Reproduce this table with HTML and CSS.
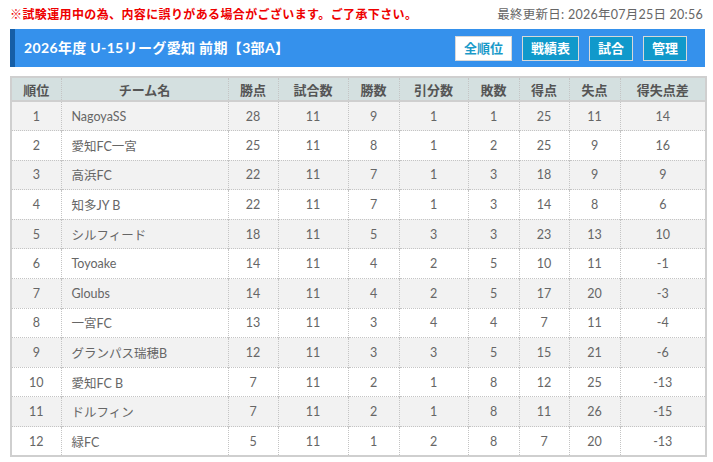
FILE: index.html
```html
<!DOCTYPE html>
<html lang="ja">
<head>
<meta charset="utf-8">
<title>2026年度 U-15リーグ愛知 前期【3部A】</title>
<link rel="stylesheet" href="styles.css">
</head>
<body>
<div class="wrap">
  <div class="top">
    <p class="notice">※試験運用中の為、内容に誤りがある場合がございます。ご了承下さい。</p>
    <p class="updated">最終更新日: 2026年07月25日 20:56</p>
  </div>
  <div class="bar">
    <h1 class="title">2026年度 U-15リーグ愛知 前期【3部A】</h1>
    <nav class="tabs">
      <a class="tab active">全順位</a>
      <a class="tab">戦績表</a>
      <a class="tab">試合</a>
      <a class="tab">管理</a>
    </nav>
  </div>
  <table class="standings">
    <colgroup>
      <col class="c-rank"><col class="c-team"><col class="c-pts"><col class="c-gp"><col class="c-w"><col class="c-d"><col class="c-l"><col class="c-gf"><col class="c-ga"><col class="c-gd">
    </colgroup>
    <thead>
      <tr><th>順位</th><th>チーム名</th><th>勝点</th><th>試合数</th><th>勝数</th><th>引分数</th><th>敗数</th><th>得点</th><th>失点</th><th>得失点差</th></tr>
    </thead>
    <tbody>
      <tr><td>1</td><td class="team">NagoyaSS</td><td>28</td><td>11</td><td>9</td><td>1</td><td>1</td><td>25</td><td>11</td><td>14</td></tr>
      <tr><td>2</td><td class="team">愛知FC一宮</td><td>25</td><td>11</td><td>8</td><td>1</td><td>2</td><td>25</td><td>9</td><td>16</td></tr>
      <tr><td>3</td><td class="team">高浜FC</td><td>22</td><td>11</td><td>7</td><td>1</td><td>3</td><td>18</td><td>9</td><td>9</td></tr>
      <tr><td>4</td><td class="team">知多JY B</td><td>22</td><td>11</td><td>7</td><td>1</td><td>3</td><td>14</td><td>8</td><td>6</td></tr>
      <tr><td>5</td><td class="team">シルフィード</td><td>18</td><td>11</td><td>5</td><td>3</td><td>3</td><td>23</td><td>13</td><td>10</td></tr>
      <tr><td>6</td><td class="team">Toyoake</td><td>14</td><td>11</td><td>4</td><td>2</td><td>5</td><td>10</td><td>11</td><td>-1</td></tr>
      <tr><td>7</td><td class="team">Gloubs</td><td>14</td><td>11</td><td>4</td><td>2</td><td>5</td><td>17</td><td>20</td><td>-3</td></tr>
      <tr><td>8</td><td class="team">一宮FC</td><td>13</td><td>11</td><td>3</td><td>4</td><td>4</td><td>7</td><td>11</td><td>-4</td></tr>
      <tr><td>9</td><td class="team">グランパス瑞穂B</td><td>12</td><td>11</td><td>3</td><td>3</td><td>5</td><td>15</td><td>21</td><td>-6</td></tr>
      <tr><td>10</td><td class="team">愛知FC B</td><td>7</td><td>11</td><td>2</td><td>1</td><td>8</td><td>12</td><td>25</td><td>-13</td></tr>
      <tr><td>11</td><td class="team">ドルフィン</td><td>7</td><td>11</td><td>2</td><td>1</td><td>8</td><td>11</td><td>26</td><td>-15</td></tr>
      <tr><td>12</td><td class="team">緑FC</td><td>5</td><td>11</td><td>1</td><td>2</td><td>8</td><td>7</td><td>20</td><td>-13</td></tr>
    </tbody>
  </table>
</div>
</body>
</html>
```
FILE: styles.css
```css
* { box-sizing: border-box; }
body {
  margin: 0;
  background: #fff;
  font-family: Lato, "Noto Sans CJK JP", sans-serif;
  color: #555;
}
.wrap {
  padding: 0 8px 0 10px;
}
.top {
  display: flex;
  justify-content: space-between;
  align-items: center;
  height: 29px;
  padding-top: 1px;
}
.top p { margin: 0; line-height: 18px; }
.notice {
  color: #ee0000;
  font-size: 12px;
  font-weight: bold;
  letter-spacing: 0.38px;
}
.updated {
  color: #666;
  font-size: 12.5px;
  letter-spacing: 0.25px;
  padding-right: 2px;
}
.bar {
  display: flex;
  align-items: center;
  justify-content: space-between;
  height: 38px;
  background: #3591ec;
  border-left: 5px solid #165ea6;
  padding: 0 18px 0 9px;
}
.title {
  margin: 0;
  color: #fff;
  font-size: 14px;
  font-weight: bold;
  line-height: 20px;
  letter-spacing: 0.35px;
}
.tabs {
  display: flex;
  gap: 10px;
}
.tab {
  display: block;
  height: 25px;
  line-height: 23px;
  padding: 0 8px;
  border: 1px solid #d8d8d8;
  background: #1099cb;
  color: #fff;
  font-size: 13px;
  font-weight: bold;
}
.tab.active {
  background: #fff;
  color: #1a9ac9;
}
.standings {
  width: 695px;
  margin-top: 9px;
  border-collapse: collapse;
  table-layout: fixed;
  border: 2px solid #cfcfcf;
  font-size: 12.5px;
}
.c-rank { width: 50px; }
.c-team { width: 167px; }
.c-pts { width: 50px; }
.c-gp { width: 70px; }
.c-w { width: 51px; }
.c-d { width: 69px; }
.c-l { width: 51px; }
.c-gf { width: 50px; }
.c-ga { width: 51px; }
.c-gd { width: 86px; }
.standings th {
  height: 24px;
  background: #d4e0e0;
  color: #555;
  font-size: 13px;
  font-weight: bold;
  border-left: 1px dotted #c4c4c4;
  border-bottom: 2px solid #cfcfcf;
  padding: 0;
  text-align: center;
}
.standings td {
  height: 29.6px;
  padding: 0;
  text-align: center;
  color: #666;
  border-left: 1px dotted #c4c4c4;
  border-top: 1px dotted #c4c4c4;
}
.standings th:first-child, .standings td:first-child { border-left: none; }
.standings tbody tr:first-child td { border-top: none; }
.standings tbody tr:nth-child(odd) td { background: #f2f2f2; }
.standings td.team {
  text-align: left;
  padding-left: 10px;
}
```
